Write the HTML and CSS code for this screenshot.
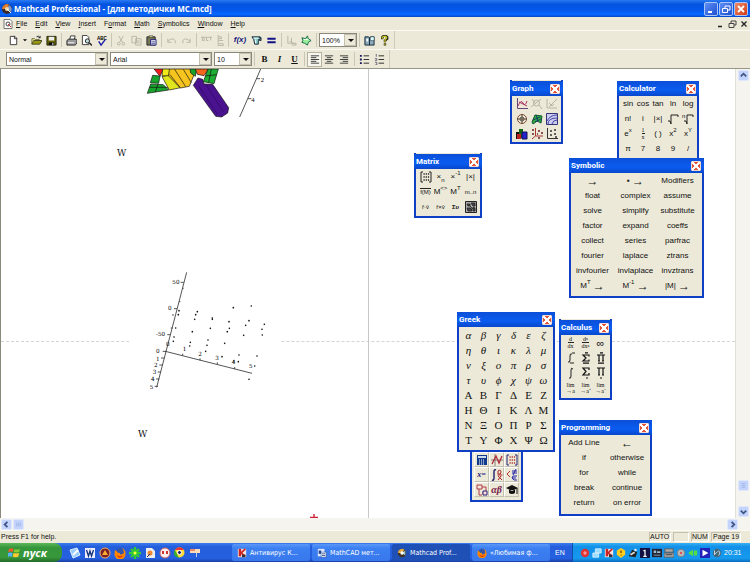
FILE: index.html
```html
<!DOCTYPE html>
<html lang="en">
<head>
<meta charset="utf-8">
<title>Mathcad Professional</title>
<link rel="stylesheet" href="styles.css">
</head>
<body>
<header class="titlebar">
  <svg class="appicon" viewBox="0 0 12 12"><circle cx="6" cy="6" r="5" fill="#3a2a2a"/><path d="M1 6a5 5 0 0 1 7-4.500L6 6z" fill="#e08030"/><path d="M8 2a5 5 0 0 1 2 7L6 6z" fill="#7a9ad0"/><circle cx="6" cy="6" r="2" fill="#f0d8b0"/><path d="M6 6l4 4" stroke="#fff"/></svg>
  <h1>Mathcad Professional - [для методички МС.mcd]</h1>
  <div class="winbtns">
    <button aria-label="Minimize"><svg viewBox="0 0 12 12"><path d="M3 9h4" stroke="#fff" stroke-width="2"/></svg></button>
    <button aria-label="Restore"><svg viewBox="0 0 12 12"><path d="M5 5V3h5v4H8M2.500 5.500h5v4h-5z" stroke="#fff" fill="none"/></svg></button>
    <button class="red" aria-label="Close"><svg viewBox="0 0 12 12"><path d="M3 3l6 6M9 3l-6 6" stroke="#fff" stroke-width="1.800"/></svg></button>
  </div>
</header>
<nav class="menubar">
  <svg class="docicon" viewBox="0 0 10 10"><path d="M1 .5h6l2 2v7H1z" fill="#fff" stroke="#777"/><circle cx="5" cy="5" r="2" fill="none" stroke="#444"/><path d="M5 5l3 3" stroke="#c33"/></svg>
  <a href="#"><u>F</u>ile</a><a href="#"><u>E</u>dit</a><a href="#"><u>V</u>iew</a><a href="#"><u>I</u>nsert</a><a href="#">F<u>o</u>rmat</a><a href="#"><u>M</u>ath</a><a href="#"><u>S</u>ymbolics</a><a href="#"><u>W</u>indow</a><a href="#"><u>H</u>elp</a>
  <div class="docbtns">
    <button aria-label="Minimize document"><svg viewBox="0 0 10 10"><path d="M3 7.500h4" stroke="#222" stroke-width="1.500"/></svg></button>
    <button aria-label="Restore document"><svg viewBox="0 0 10 10"><path d="M4 4V2h5v4H7M2 4.500h5v4H2z" stroke="#444" fill="none"/></svg></button>
    <button aria-label="Close document"><svg viewBox="0 0 10 10"><path d="M2.500 2.500l5 5M7.500 2.500l-5 5" stroke="#222" stroke-width="1.300"/></svg></button>
  </div>
</nav>
<div class="bar">
  <div class="tools">
    <button aria-label="New"><svg viewBox="0 0 12 12"><path d="M2.500 1.500h5l2 2v7h-7z" fill="#fff" stroke="#333"/><path d="M7 1v3h3" fill="none" stroke="#333"/></svg></button>
    <button class="slim" aria-label="New from template"><svg viewBox="0 0 12 12"><path d="M3 5h6L6 8z"/></svg></button>
    <button aria-label="Open"><svg viewBox="0 0 12 12"><path d="M1 10V4h3l1 1h4v2" fill="#ee9" stroke="#663"/><path d="M1 10l2-4h9l-2.500 4z" fill="#991" stroke="#442"/><path d="M6 2q2-2 4 1M10 1v2H8" fill="none" stroke="#222"/></svg></button>
    <button aria-label="Save"><svg viewBox="0 0 12 12"><path d="M1 1.500h10v9.500H1z" fill="#660" stroke="#221"/><path d="M3 2h6v4H3z" fill="#eee"/><path d="M3 8h6v3H3z" fill="#111"/><path d="M7 8.500h1V11H7z" fill="#fff"/></svg></button>
    <i class="sep"></i>
    <button aria-label="Print"><svg viewBox="0 0 12 12"><path d="M4 5l1-4h5L9 5" fill="#fff" stroke="#333"/><path d="M1 6l2-1.500h8L12 6v3l-2 2H1z" fill="#999" stroke="#222"/><path d="M2 8.500h7" stroke="#fff"/></svg></button>
    <button aria-label="Print preview"><svg viewBox="0 0 12 12"><path d="M1.500 .5h5l2 2v8h-7z" fill="#fff" stroke="#333"/><circle cx="7" cy="6.500" r="2.300" fill="#bdd" stroke="#222"/><path d="M9 8.500l3 3" stroke="#222" stroke-width="1.500"/></svg></button>
    <button aria-label="Check spelling"><svg viewBox="0 0 12 12"><text x="1" y="5" font-size="5" font-weight="bold">ABC</text><path d="M3 7l2.500 4L10 5" fill="none" stroke="#22a" stroke-width="1.600"/></svg></button>
    <i class="sep"></i>
    <button aria-label="Cut"><svg viewBox="0 0 12 12" class="off"><path d="M3 1l4 7M8 1L4 8"/><circle cx="3" cy="9.500" r="1.500"/><circle cx="8" cy="9.500" r="1.500"/></svg></button>
    <button aria-label="Copy"><svg viewBox="0 0 12 12" class="off"><path d="M1 1.500h5v7H1zM5 4h6v7H5zM6.500 6.500h3M6.500 8.500h3"/></svg></button>
    <button aria-label="Paste"><svg viewBox="0 0 12 12"><path d="M1 2h9v9H1z" fill="#775" stroke="#222"/><path d="M3.500 .8h4v2h-4z" fill="#cc8" stroke="#333" stroke-width=".6"/><path d="M5 5h6v6H5z" fill="#dde" stroke="#227"/><path d="M6 7.500h4M6 9.500h4" stroke="#227" stroke-width=".7"/></svg></button>
    <i class="sep"></i>
    <button aria-label="Undo"><svg viewBox="0 0 12 12" class="off"><path d="M2 4v4h4M2 7q5-5 8-1v3"/></svg></button>
    <button aria-label="Redo"><svg viewBox="0 0 12 12" class="off"><path d="M10 4v4H6M10 7Q5 2 2 6v3"/></svg></button>
    <i class="sep"></i>
    <button aria-label="Align across"><svg viewBox="0 0 12 12" class="off"><path d="M0 2.500h12M1.500 2v4h2V3M6 3v3h2M10.500 2v4"/></svg></button>
    <button class="narrow" aria-label="Align down"><svg viewBox="0 0 12 12" class="off"><path d="M3.500 0v12M4 2h3v2H4M4 6h5M4 9.500h5v2H4"/></svg></button>
    <i class="sep"></i>
    <button class="fx" aria-label="Insert function">f(x)</button>
    <button aria-label="Insert unit"><svg viewBox="0 0 12 12"><path d="M1 2h9v3H8v5H4L3 5z" fill="#8cc" stroke="#123"/><path d="M3 3.500h5M5 5v4" stroke="#fff"/><path d="M9 3h2v3H9" fill="none" stroke="#123"/></svg></button>
    <button aria-label="Calculate"><svg viewBox="0 0 12 12"><path d="M1.500 4h9M1.500 8h9" stroke="#118" stroke-width="2.200"/></svg></button>
    <i class="sep"></i>
    <button aria-label="Insert hyperlink"><svg viewBox="0 0 12 12" class="off"><path d="M2 1v8h4V3M4 7l6 3M6 9h5v2H6"/></svg></button>
    <button aria-label="Component wizard"><svg viewBox="0 0 12 12"><path d="M1 3l4 1 2-3 1 3 3 2-3 2-1 3-3-2-3-1 1-2z" fill="#9e9" stroke="#164"/><path d="M3 5h5" stroke="#fff"/></svg></button>
    <i class="sep"></i>
    <span class="combo zoomsel"><select aria-label="Zoom"><option>100%</option></select></span>
    <i class="sep"></i>
    <button aria-label="Resource center"><svg viewBox="0 0 12 12"><path d="M1 2h4l1 1 1-1h4v9H1z" fill="#8ab" stroke="#123"/><path d="M6 3v8" stroke="#123"/><path d="M2.500 4h2v3h-2z" fill="#fff"/><path d="M7 2h4v4H7z" fill="#dff" stroke="#345" stroke-width=".6"/></svg></button>
    <button aria-label="Help"><svg viewBox="0 0 12 12"><path d="M3.500 4.500V2.500L5 1h2.500L9 2.500V4L6.500 6v2M6.500 9v2.500" fill="none" stroke="#221" stroke-width="2.600"/><path d="M3.500 4V2.500L5 1.500h2.500L8.500 3 6.500 5.500V8M6.500 9.500v1.500" fill="none" stroke="#cc2" stroke-width="1.300"/></svg></button>
  </div>
</div>
<div class="bar">
  <div class="tools">
    <span class="combo style"><select aria-label="Style"><option>Normal</option></select></span>
    <span class="combo font"><select aria-label="Font"><option>Arial</option></select></span>
    <span class="combo size"><select aria-label="Font size"><option>10</option></select></span>
    <i class="sep"></i>
    <button class="ch"><b>B</b></button>
    <button class="ch"><em>I</em></button>
    <button class="ch"><u>U</u></button>
    <i class="sep"></i>
    <button class="on" aria-label="Align left"><svg viewBox="0 0 12 12"><path d="M2 2h9M2 4h6M2 6h9M2 8h6M2 10h9" stroke="#333"/></svg></button>
    <button aria-label="Center"><svg viewBox="0 0 12 12"><path d="M1 2h9M3 4h5M1 6h9M3 8h5M1 10h9" stroke="#333"/></svg></button>
    <button aria-label="Align right"><svg viewBox="0 0 12 12"><path d="M1 2h9M4 4h6M1 6h9M4 8h6M1 10h9" stroke="#333"/></svg></button>
    <i class="sep"></i>
    <button aria-label="Bullets"><svg viewBox="0 0 12 12"><path d="M1 2h2M1 6h2M1 10h2" stroke="#115" stroke-width="2"/><path d="M5 2h6M5 6h6M5 10h6" stroke="#222"/></svg></button>
    <button aria-label="Numbering"><svg viewBox="0 0 12 12"><path d="M2.500 0v3M1 5h2v2H1M1 9h2v3H1" stroke="#446" fill="none" stroke-width=".8"/><path d="M5 2h6M5 6h6M5 10h6" stroke="#222"/></svg></button>
  </div>
</div>

<main class="work">
  <div class="doc">
    <div class="guide-h"></div>
    <div class="guide-v"></div>
    <svg class="fig surface" viewBox="0 9 420 171">
      <g stroke="#111" stroke-width="2">
        <path d="M42 9h28l-10 22z" fill="#f21c1c"/>
        <path d="M68 9h22l-4 22-20-2z" fill="#f3e818"/>
        <path d="M38 28l22 2-4 22-25-2zM32 54l38 2 16 16-64 10z" fill="#18a32c"/>
        <path d="M28 64h56M54 54l-8 24" fill="none"/>
        <path d="M66 32l22-4 34 37-34 7z" fill="#e0e51e"/>
        <path d="M88 9h68l5 20-13 32-27 5-35-36z" fill="#f6c41e"/>
        <path d="M90 26l30 38M104 10l33 52M130 10l24 40" fill="none"/>
        <path d="M150 9h20l-4 22-14-10z" fill="#18a32c"/>
        <path d="M166 9h40l-14 20-20-4z" fill="#f2661e"/>
        <path d="M160 58l14-22 14 4 4 14 26 1 48 70-3 16-18 12-18-2z" fill="#4b128f"/>
        <path d="M176 60l56 84M198 56l52 82" fill="none" stroke="#2c0a60"/>
        <path d="M204 9h31l-13 44-32-6z" fill="#1cad32"/>
        <path d="M196 30l34-4M214 9l-8 40" fill="none"/>
      </g>
      <path d="M362 9l-63 144M350 38h10M324 98h10" stroke="#333" stroke-width="2.500" fill="none"/>
      <text x="362" y="47">2</text><text x="334" y="107">4</text>
    </svg>
    <span class="w w1">W</span>
    <svg class="fig scatter" viewBox="0 0 450 390">
      <path d="M170 22L80 367M106 259l260 66M152 52h9M132 131h9M112 209h9M98 259h10M93 279h10M88 300h10M83 321h10M78 342h10M74 364h10M157 70h4M147 110h4M126 150h6M122 189h6M158 272v-6M210 286v-6M262 298v-6M314 312v-6" fill="none" stroke="#333" stroke-width="2.500"/>
      <g class="labels"><text x="127" y="58">50</text><text x="114" y="134">0</text><text x="78" y="212">-50</text><text x="108" y="243">0</text><text x="78" y="264">0</text><text x="78" y="287">1</text><text x="72" y="307">2</text><text x="68" y="328">3</text><text x="63" y="349">4</text><text x="59" y="371">5</text><text x="158" y="259">1</text><text x="205" y="272">2</text><text x="256" y="284">3</text><text x="305" y="298">4</text><text x="357" y="310">5</text></g>
      <path class="dots" d="M147 137h0M145 149h0M137 189h0M132 216h0M130 229h0M202 140h0M197 149h0M194 163h0M187 200h0M181 232h0M179 243h0M247 159h0M247 163h0M241 190h0M234 225h0M231 241h0M227 259h0M310 128h0M297 170h0M298 190h0M292 200h0M284 235h0M276 275h0M364 123h0M357 167h0M347 181h0M341 211h0M327 270h0M325 290h0M312 288h0M403 178h0M396 193h0M397 210h0M381 273h0M374 303h0M357 343h0"/>
    </svg>
    <span class="w w2">W</span>
    <svg class="cross" viewBox="0 0 8 4"><path d="M0 3.500h8M4 0v4" stroke="#d22038" stroke-width="1.400"/></svg>

    <section class="pal graph"><h2>Graph<button class="x" aria-label="Close Graph"></button></h2>
      <div class="cells">
        <button aria-label="X-Y plot"><svg viewBox="0 0 12 12"><path d="M1.500 0v10.500H12" stroke="#647" fill="none"/><path d="M2 8q3-7 5-3t4-2M3 4l8 4" fill="none" stroke="#a36"/></svg></button>
        <button aria-label="Zoom plot"><svg viewBox="0 0 12 12" class="off"><circle cx="5.500" cy="5" r="3"/><path d="M8 7l3 4M0 9l10-8M1 1l3 4"/></svg></button>
        <button aria-label="Trace"><svg viewBox="0 0 12 12" class="off"><path d="M1 1v9h10M3 9l8-8M3 5l3 3 2-2"/></svg></button>
        <button aria-label="Polar plot"><svg viewBox="0 0 12 12"><circle cx="6" cy="6" r="4.500" fill="none" stroke="#854a30"/><circle cx="6" cy="6" r="2" fill="none" stroke="#222" stroke-width=".7"/><path d="M6 1v10M1 6h10" stroke="#543"/></svg></button>
        <button aria-label="Surface plot"><svg viewBox="0 0 12 12"><path d="M1 9l3-7 7 1-1 7-4-2-4 3z" fill="#2fae3a" stroke="#153"/><path d="M2 7l7-3M5 2l2 6M4 9l6-3" stroke="#127" stroke-width=".8"/></svg></button>
        <button aria-label="Contour plot"><svg viewBox="0 0 12 12"><path d="M.5.500h11v11H.5z" fill="#cce" stroke="#337"/><path d="M1 8q3-6 10-6M2 11q0-6 9-6M6 11q1-4 5-4" fill="none" stroke="#44a"/></svg></button>
        <button aria-label="3D bar plot"><svg viewBox="0 0 12 12"><path d="M0 4h4v7H0z" fill="#111"/><path d="M3 1h4v9H3z" fill="#161"/><path d="M1 6h4v5H1z" fill="#b22"/><path d="M6 4h5v7H6z" fill="#22c" stroke="#115"/></svg></button>
        <button aria-label="3D scatter"><svg viewBox="0 0 12 12"><path d="M4.500 0v8H12M4.500 8L1 11" fill="none" stroke="#a33"/><path d="M1 2h2M7 3h2M6 6h1M10 5h2M1 6h2M7 10h2" stroke="#622" stroke-width="1.500"/></svg></button>
        <button aria-label="Vector field"><svg viewBox="0 0 12 12"><path d="M1.500 0v10.500H12" stroke="#333" fill="none"/><path d="M4 3h2M8 2h2M4 7h2M8 6h2M9 9h2" stroke="#333" stroke-width="1.500"/></svg></button>
      </div></section>

    <section class="pal calculator"><h2>Calculator<button class="x" aria-label="Close Calculator"></button></h2>
      <div class="cells">
        <button>sin</button><button>cos</button><button>tan</button><button>ln</button><button>log</button>
        <button>n!</button><button>i</button><button>|×|</button>
        <button aria-label="Square root"><svg viewBox="0 0 12 12"><path d="M1 8h2l1 3V2h7v2" fill="none" stroke="#222"/></svg></button>
        <button aria-label="Nth root"><svg viewBox="0 0 12 12"><text x="0" y="5" font-size="6">n</text><path d="M2 8h2l1 3V2h6v2" fill="none" stroke="#222"/></svg></button>
        <button><span>e<sup>x</sup></span></button><button><span class="frac"><u>1</u>x</span></button><button>( )</button><button><span>x<sup>2</sup></span></button><button><span>x<sup>Y</sup></span></button>
        <button>π</button><button>7</button><button>8</button><button>9</button><button>/</button>
      </div></section>

    <section class="pal matrix"><h2>Matrix<button class="x" aria-label="Close Matrix"></button></h2>
      <div class="cells">
        <button aria-label="Matrix"><svg viewBox="0 0 12 12"><path d="M3 1H1v10h2M9 1h2v10H9" fill="none" stroke="#222"/><path d="M3.500 3h6M3.500 6h6M3.500 9h6" stroke="#222" stroke-width="1.400" stroke-dasharray="1.200 1"/></svg></button>
        <button><span>×<sub>n</sub></span></button><button><span>×<sup>-1</sup></span></button><button>|×|</button>
        <button class="tiny" aria-label="Vectorize"><span class="vec">f(M)</span></button><button><span>M<sup>&lt;&gt;</sup></span></button><button><span>M<sup>T</sup></span></button><button class="tiny">m..n</button>
        <button class="tiny">ř·v̄</button><button class="tiny">ř×v̄</button><button class="tiny"><b>Συ</b></button>
        <button aria-label="Picture"><svg viewBox="0 0 12 12"><path d="M.5.500h11v11H.5z" fill="#aaa" stroke="#222"/><path d="M2 3h3v2H3zM6 2h4v3H8zM2 7h4l1 3H3zM8 6l2 1v3H8zM5 5l3 3" fill="#444" stroke="#222" stroke-width=".8"/></svg></button>
      </div></section>

    <section class="pal symbolic"><h2>Symbolic<button class="x" aria-label="Close Symbolic"></button></h2>
      <div class="cells">
        <button><span class="arrow">→</span></button><button>▪&nbsp;<span class="arrow">→</span></button><button>Modifiers</button>
        <button>float</button><button>complex</button><button>assume</button>
        <button>solve</button><button>simplify</button><button>substitute</button>
        <button>factor</button><button>expand</button><button>coeffs</button>
        <button>collect</button><button>series</button><button>parfrac</button>
        <button>fourier</button><button>laplace</button><button>ztrans</button>
        <button>invfourier</button><button>invlaplace</button><button>invztrans</button>
        <button><span>M<sup>T</sup>&nbsp;</span><span class="arrow">→</span></button><button><span>M<sup>-1</sup>&nbsp;</span><span class="arrow">→</span></button><button>|M|&nbsp;<span class="arrow">→</span></button>
      </div></section>

    <section class="pal mathbar" aria-label="Math">
      <div class="cells">
        <button aria-label="Calculator toolbar"><svg viewBox="0 0 12 12"><path d="M1 1h10v10H1z" fill="#123a8c"/><path d="M2 2h8v2H2z" fill="#cde"/><path d="M3 6h6M3 8h6M3 10h6" stroke="#fff" stroke-dasharray="1 1"/></svg></button>
        <button aria-label="Graph toolbar"><svg viewBox="0 0 12 12"><path d="M0 6h12M4 0v12" stroke="#555" stroke-width=".7"/><path d="M1 10L5 2l3 7 3-7" fill="none" stroke="#b22a3a" stroke-width="1.300"/></svg></button>
        <button aria-label="Matrix toolbar"><svg viewBox="0 0 12 12"><path d="M3 1H1v10h2M9 1h2v10H9" fill="none" stroke="#227"/><path d="M3.500 3h6M3.500 6h6M3.500 9h6" stroke="#a33" stroke-width="1.500" stroke-dasharray="1.200 1"/></svg></button>
        <button class="navy">x=</button>
        <button aria-label="Calculus toolbar"><svg viewBox="0 0 12 12"><path d="M5 1Q3 0 3 3v6q0 3-2 2" fill="none" stroke="#116" stroke-width="1.300"/><path d="M7 2q3-2 3 1T7 5zM6.500 6h5M7 11l3-4M7 7l4 4" fill="none" stroke="#a22"/></svg></button>
        <button aria-label="Boolean toolbar"><svg viewBox="0 0 12 12"><path d="M4 2L1 5l3 3" fill="none" stroke="#b33"/><path d="M6 2h5M6 4h5M10 0L7 6M11 7H7l-1 2 2 2h3M6 9h4" fill="none" stroke="#22a"/></svg></button>
        <button aria-label="Programming toolbar"><svg viewBox="0 0 12 12"><path d="M1 1h5v4H1zM3 5v6h3M6 3h4v4M6 9h2" fill="none" stroke="#b33a4a"/><path d="M7 7h4v4H7z" fill="#fdd" stroke="#227"/></svg></button>
        <button class="ab"><i>αβ</i></button>
        <button aria-label="Symbolic toolbar"><svg viewBox="0 0 12 12"><path d="M0 4l6-3 6 3-6 3zM3 6v3q3 2 6 0V6" fill="#111"/><path d="M11 4v6" stroke="#111"/></svg></button>
      </div></section>

    <section class="pal greek"><h2>Greek<button class="x" aria-label="Close Greek"></button></h2>
      <div class="cells">
        <button>α</button><button>β</button><button>γ</button><button>δ</button><button>ε</button><button>ζ</button>
        <button>η</button><button>θ</button><button>ι</button><button>κ</button><button>λ</button><button>μ</button>
        <button>ν</button><button>ξ</button><button>ο</button><button>π</button><button>ρ</button><button>σ</button>
        <button>τ</button><button>υ</button><button>ϕ</button><button>χ</button><button>ψ</button><button>ω</button>
        <button class="up">Α</button><button class="up">Β</button><button class="up">Γ</button><button class="up">Δ</button><button class="up">Ε</button><button class="up">Ζ</button>
        <button class="up">Η</button><button class="up">Θ</button><button class="up">Ι</button><button class="up">Κ</button><button class="up">Λ</button><button class="up">Μ</button>
        <button class="up">Ν</button><button class="up">Ξ</button><button class="up">Ο</button><button class="up">Π</button><button class="up">Ρ</button><button class="up">Σ</button>
        <button class="up">Τ</button><button class="up">Υ</button><button class="up">Φ</button><button class="up">Χ</button><button class="up">Ψ</button><button class="up">Ω</button>
      </div></section>

    <section class="pal calculus"><h2>Calculus<button class="x" aria-label="Close Calculus"></button></h2>
      <div class="cells">
        <button><span class="frac"><u>d</u>dx</span></button><button><span class="frac"><u>dⁿ</u>dxⁿ</span></button><button class="big">∞</button>
        <button aria-label="Definite integral"><svg viewBox="0 0 12 12"><path d="M7 2Q5 1 5 4v4q0 3-2 2M7 1h3M5 11h4" fill="none" stroke="#222"/></svg></button>
        <button aria-label="Summation"><svg viewBox="0 0 12 12"><path d="M9 4.500V3H3l3 3-3 3h6V7.500M5 .8h3M3 11.200h6" fill="none" stroke="#111" stroke-width="1.200"/></svg></button>
        <button aria-label="Product"><svg viewBox="0 0 12 12"><path d="M2 3h8M4 3v6M8 3v6M3 9h2M7 9h2M5 .8h3M3 11.200h6" fill="none" stroke="#111" stroke-width="1.200"/></svg></button>
        <button aria-label="Indefinite integral"><svg viewBox="0 0 12 12"><path d="M8 2Q6 0 6 3v6q0 3-2 2" fill="none" stroke="#222"/></svg></button>
        <button aria-label="Range sum"><svg viewBox="0 0 12 12"><path d="M9 3V1H3l3 3.500L3 8h6V6M6 11h2" fill="none" stroke="#111" stroke-width="1.200"/></svg></button>
        <button aria-label="Range product"><svg viewBox="0 0 12 12"><path d="M2 1h8M4 1v7M8 1v7M3 8h2M7 8h2M5 11h2" fill="none" stroke="#111" stroke-width="1.200"/></svg></button>
        <button><span class="frac">lim<br>→a</span></button><button><span class="frac">lim<br>→a⁺</span></button><button><span class="frac">lim<br>→a⁻</span></button>
      </div></section>

    <section class="pal programming"><h2>Programming<button class="x" aria-label="Close Programming"></button></h2>
      <div class="cells">
        <button>Add Line</button><button><span class="arrow">←</span></button>
        <button>if</button><button>otherwise</button>
        <button>for</button><button>while</button>
        <button>break</button><button>continue</button>
        <button>return</button><button>on error</button>
      </div></section>
  </div>
  <div class="vscroll">
    <button aria-label="Scroll up"><svg viewBox="0 0 10 10"><path d="M2 6l3-3 3 3" /></svg></button>
    <span class="space"></span>
    <button aria-label="Vertical position"><svg viewBox="0 0 10 10" class="grip"><path d="M3 3h4M3 5h4M3 7h4"/></svg></button>
    <span class="end"></span>
    <button aria-label="Scroll down"><svg viewBox="0 0 10 10"><path d="M2 4l3 3 3-3"/></svg></button>
  </div>
</main>
<div class="hscroll">
  <button aria-label="Scroll left"><svg viewBox="0 0 10 10"><path d="M6 2L3 5l3 3"/></svg></button>
  <button aria-label="Horizontal position"><svg viewBox="0 0 10 10" class="grip"><path d="M3 3v4M5 3v4M7 3v4"/></svg></button>
  <span class="space"></span>
  <button aria-label="Scroll right"><svg viewBox="0 0 10 10"><path d="M4 2l3 3-3 3"/></svg></button>
</div>
<div class="status">
  <span class="msg">Press F1 for help.</span><span class="pane auto">AUTO</span><span class="pane blank"></span><span class="pane num">NUM</span><span class="pane page">Page 19</span>
</div>
<footer class="taskbar">
  <button class="start"><svg viewBox="0 0 14 13"><path d="M1 3q2-2 5-.5L5 6Q3 5 0 6z" fill="#ee5a2a"/><path d="M7 3q3 1 6-.5L12 6q-3 1-6 0z" fill="#8c3"/><path d="M0 7q3-1 5 0l-1 4q-2-1-4 0z" fill="#58b0f8"/><path d="M6 7q3 1 6 0l-1 4q-3 1-6 0z" fill="#fc3"/></svg>пуск</button>
  <div class="quick">
    <button aria-label="Desktop"><svg viewBox="0 0 12 12"><path d="M1 3l7-2 3 7-7 3z" fill="#9cf" stroke="#def"/><path d="M4 8l5-5" stroke="#fff" stroke-width="2"/></svg></button>
    <button aria-label="Word"><svg viewBox="0 0 12 12"><path d="M1 1h10v10H1z" fill="#eef"/><path d="M2.500 3l2 6 1.500-5 1.500 5 2-6" fill="none" stroke="#137" stroke-width="1.300"/></svg></button>
    <button aria-label="Player"><svg viewBox="0 0 12 12"><circle cx="6" cy="6" r="5" fill="#722" stroke="#fa6"/><path d="M3 8l3-5 3 5z" fill="#fa3"/></svg></button>
    <button aria-label="Firefox"><svg viewBox="0 0 12 12"><use href="#fox"/></svg></button>
    <button aria-label="ICQ"><svg viewBox="0 0 12 12"><path d="M6 0v12M0 6h12M2 2l8 8M10 2l-8 8" stroke="#3c3" stroke-width="2.400"/><circle cx="6" cy="6" r="1.500" fill="#ff4"/></svg></button>
    <button aria-label="Media"><svg viewBox="0 0 12 12"><path d="M2 1h6l3 3v7H2z" fill="#eee"/><circle cx="6" cy="6" r="2.500" fill="#e83"/><path d="M3 10l3-3" stroke="#227"/></svg></button>
    <button aria-label="Download manager"><svg viewBox="0 0 12 12"><circle cx="6" cy="6" r="5" fill="#fee"/><path d="M3 4h2v3H3zM7 4h2v3H7z" fill="#c33"/><circle cx="6" cy="6" r="5" fill="none" stroke="#c66"/></svg></button>
    <button aria-label="Chrome"><svg viewBox="0 0 12 12"><circle cx="5.500" cy="5.500" r="5" fill="#fd3"/><path d="M1 3a5 5 0 0 1 9 0H6z" fill="#e33"/><path d="M1 3l4 8A5 5 0 0 1 1 3" fill="#3a3"/><circle cx="5.500" cy="5.500" r="2" fill="#226" stroke="#fff"/></svg></button>
    <button aria-label="Archive"><svg viewBox="0 0 12 12"><path d="M1 2h10v4H1z" fill="#fdb"/><path d="M1 2h5v2H1z" fill="#e86"/><path d="M7 6h1v4H7z" fill="#bcd"/></svg></button>
  </div>
  <div class="tasks">
    <button><svg viewBox="0 0 12 12"><use href="#kav"/></svg>Антивирус К...</button>
    <button><svg viewBox="0 0 12 12"><path d="M1 1h8v9H1z" fill="#dde8ff"/><path d="M2 3h3v4H2z" fill="#248"/><path d="M5 5h6v6H5z" fill="#fff" stroke="#248" stroke-width=".6"/><path d="M6 7h4M6 9h4" stroke="#248"/></svg>MathCAD мет...</button>
    <button class="active"><svg viewBox="0 0 12 12"><circle cx="6" cy="6" r="5" fill="#432"/><path d="M1 6a5 5 0 0 1 8-4L6 6z" fill="#da4"/><path d="M6 6l4-3v6z" fill="#9cd"/><circle cx="6" cy="6" r="2" fill="#fff"/></svg>Mathcad Prof...</button>
    <button><svg viewBox="0 0 12 12"><g id="fox"><circle cx="6" cy="6" r="5" fill="#35a"/><path d="M1 3q2 1 3 3 2-1 2 1t4-1q0-3-2-5 4 2 3.500 6A5.500 5.500 0 0 1 .5 7z" fill="#f80"/><path d="M2 7q3 4 8 1-3 4-6 2z" fill="#d30"/></g></svg>«Любимая ф...</button>
  </div>
  <span class="lang">EN</span>
  <div class="tray">
    <svg viewBox="0 0 12 12"><circle cx="6" cy="6" r="5" fill="#d33"/><circle cx="6" cy="6" r="2" fill="#f99"/></svg>
    <svg viewBox="0 0 12 12"><path d="M4 1h7v5H4zM1 6h7v5H1z" fill="#9df" stroke="#def"/></svg>
    <svg viewBox="0 0 12 12"><g id="kav"><path d="M1 1h10v10H1z" fill="#f4e4e4"/><path d="M2 1h3v9H2z" fill="#c22"/><path d="M10 1L5 6l5 4" fill="none" stroke="#c22" stroke-width="2"/><path d="M6 8h4v3H6z" fill="#333"/></g></svg>
    <svg viewBox="0 0 12 12"><path d="M6 0l5 3v5l-5 4-5-4V3z" fill="#fc2"/><path d="M6 3v3M6 8v1" stroke="#640" stroke-width="1.500"/></svg>
    <svg viewBox="0 0 12 12"><path d="M1 10l4-8 6 3-2 6z" fill="#222"/><path d="M3 8l5-3" stroke="#ddd" stroke-width="2"/><circle cx="9" cy="2.500" r="1.500" fill="#eee"/></svg>
    <svg viewBox="0 0 12 12"><path d="M0 0h12v12H0z" fill="#114"/><path d="M6 2v8M4 3h2M4 10h4" stroke="#fff" stroke-width="1.500"/></svg>
    <svg viewBox="0 0 12 12"><path d="M0 1h12v10H0z" fill="#223"/><path d="M2 3h3v3H2zM6 4h4v2H6zM2 8h8v1H2z" fill="#9bc"/></svg>
    <svg viewBox="0 0 12 12"><path d="M1 1h10v4H1zM0 6h12v5H0z" fill="#aaa" stroke="#555"/><path d="M2 8h8" stroke="#333"/></svg>
    <svg viewBox="0 0 12 12"><circle cx="6" cy="6" r="4.500" fill="#bbb" stroke="#777"/><circle cx="6" cy="6" r="1.500" fill="#d55"/></svg>
    <svg viewBox="0 0 12 12"><path d="M6 2v8L1 7V5zM7 3h4v6H7z" fill="#5d4"/></svg>
    <svg viewBox="0 0 12 12"><path d="M0 0h12v12H0z" fill="#22b"/><path d="M3 2l7 4-7 4z" fill="#fff"/></svg>
    <svg viewBox="0 0 12 12"><circle cx="6" cy="6" r="5" fill="#467"/><path d="M3 3v5l4-4M8 3q3 3 0 6" fill="none" stroke="#def"/></svg>
    <time>20:31</time>
  </div>
</footer>
</body>
</html>
```
FILE: styles.css
```css
* { box-sizing: border-box; }
body {
  margin: 0;
  height: 100vh;
  display: flex;
  flex-direction: column;
  overflow: hidden;
  background: #ece9d8;
  color: #111;
  font: 8px/10px "Liberation Sans", Arial, sans-serif;
}
button {
  border: 0;
  padding: 0;
  margin: 0;
  background: none;
  color: inherit;
  font: inherit;
  display: flex;
  align-items: center;
  justify-content: center;
  white-space: nowrap;
}
svg { display: block; flex: none; }
.off { fill: none; stroke: #b8b5a4; }

.titlebar {
  height: 17px;
  display: flex;
  align-items: center;
  padding: 0 2px 0 1px;
  background: linear-gradient(#2a7af4, #0353de 25%, #0458ec 60%, #0668ff 85%, #0347c8);
}
.appicon { width: 12px; height: 12px; }
.titlebar h1 {
  margin: 0 0 0 1px;
  flex: 1;
  color: #fff;
  font: bold 8px/12px "Open Sans", "Noto Sans", sans-serif;
}
.winbtns { display: flex; gap: 1px; }
.winbtns button {
  width: 14px;
  height: 14px;
  border: 1px solid #a9c4f8;
  border-radius: 2px;
  background: linear-gradient(135deg, #5d8ff5, #1f4fd0);
}
.winbtns .red { background: linear-gradient(135deg, #ee8a68, #d13c14); }
.winbtns svg { width: 12px; height: 12px; }

.menubar {
  height: 13px;
  display: flex;
  align-items: center;
  gap: 8px;
  padding: 0 1px 0 3px;
  font-size: 7px;
}
.menubar a { color: #111; text-decoration: none; }
.docicon { width: 10px; height: 10px; margin-right: -5px; }
.docbtns { margin-left: auto; display: flex; gap: 2px; }
.docbtns svg { width: 10px; height: 10px; }

.bar {
  display: flex;
  height: 19px;
  border-top: 1px solid #fbfaf4;
}
.bar + .bar { height: 20px; border-bottom: 1px solid #98968a; }
.tools {
  display: flex;
  align-items: center;
  padding: 0 2px 0 6px;
  border-right: 1px solid #cfccbc;
}
.tools button { width: 15px; height: 15px; }
.tools svg { width: 11px; height: 11px; }
.tools .slim { width: 8px; }
.tools .slim svg { width: 8px; height: 8px; }
.tools .narrow { width: 12px; }
.tools .fx { width: 18px; color: #15157c; font: italic bold 8px/10px "Liberation Sans", sans-serif; }
.tools .ch { font: bold 9px/10px "Liberation Serif", serif; }
.tools .on { background: #f7f6ee; border: 1px solid #b5b2a0; }
.sep { width: 1px; height: 14px; margin: 0 2px; background: #c9c6b5; }
.combo {
  position: relative;
  height: 14px;
  display: flex;
  background: #fff;
  border: 1px solid #8a887c;
}
.combo select {
  appearance: none;
  flex: 1;
  min-width: 0;
  border: 0;
  padding: 0 12px 0 2px;
  background: none;
  color: #111;
  font: 7px/11px "Liberation Sans", sans-serif;
}
.combo::before {
  content: "";
  position: absolute;
  right: 0;
  top: 0;
  bottom: 0;
  width: 10px;
  background: #ece9d8;
  border: 1px solid #c4c1b0;
}
.combo::after {
  content: "";
  position: absolute;
  right: 2px;
  top: 5px;
  border: 3px solid transparent;
  border-top-color: #111;
  border-bottom: 0;
  pointer-events: none;
}
.style { width: 102px; }
.font { width: 102px; margin: 0 2px; }
.size { width: 38px; }
.zoomsel { width: 38px; }

.work { flex: 1; min-height: 0; display: flex; background: #fff; }
.doc {
  flex: 1;
  position: relative;
  overflow: hidden;
  border-left: 1px solid #8b897c;
}
.guide-h { position: absolute; left: 0; right: 0; top: 272px; border-top: 1px dashed #d4d4d4; }
.guide-v { position: absolute; left: 367px; top: 0; bottom: 0; border-left: 1px solid #c8c8c8; }
.fig { position: absolute; font: 18px "Liberation Serif", serif; background: #fff; }
.surface { left: 139px; top: 0; width: 140px; height: 57px; font-size: 20px; }
.scatter { left: 129px; top: 196px; width: 150px; height: 130px; }
.labels { font: 17px "DejaVu Serif", serif; }
.dots { stroke: #111; stroke-width: 5; stroke-linecap: round; fill: none; }
.w { position: absolute; font: 9px/12px "DejaVu Serif", serif; }
.w1 { left: 116px; top: 78px; }
.w2 { left: 137px; top: 359px; }
.cross { position: absolute; left: 309px; bottom: 0; width: 8px; height: 4px; }

.pal {
  position: absolute;
  border: 2px solid #0f3fc4;
  border-top: 0;
  background: #ece9d8;
}
.pal h2 {
  margin: 0 -2px;
  height: 15px;
  padding: 0 3px 0 2px;
  display: flex;
  align-items: center;
  justify-content: space-between;
  color: #fff;
  background: linear-gradient(#0c4fd8, #0a5cf0 60%, #0848cc);
  font: bold 8px/10px Roboto, "Open Sans", sans-serif;
}
.x {
  width: 10px;
  height: 10px;
  border: 1px solid #f4d8d0;
  border-radius: 1px;
  background:
    linear-gradient(45deg, transparent 43%, #fff 43%, #fff 57%, transparent 57%),
    linear-gradient(135deg, transparent 43%, #fff 43%, #fff 57%, transparent 57%),
    #e0573c;
}
.cells { display: grid; grid-template-columns: repeat(3, 15px); grid-auto-rows: 15px; justify-content: center; }
.cells svg { width: 12px; height: 12px; }
.cells sup, .cells sub { font-size: 6px; line-height: 0; }
.arrow { font: 12px/10px "Liberation Serif", serif; }
.graph { left: 509px; top: 11px; width: 53px; padding: 1px 0; }
.calculator { left: 616px; top: 12px; width: 82px; padding: 0 0 14px; }
.calculator .cells { grid-template-columns: repeat(5, 15px); }
.matrix { left: 413px; top: 84px; width: 68px; padding: 1px 0 2px; }
.matrix .cells { grid-template-columns: repeat(4, 15px); }
.tiny { font-size: 6px; }
.vec { border-top: 1px solid #222; line-height: 6px; }
.symbolic { left: 568px; top: 89px; width: 135px; padding-bottom: 3px; }
.symbolic .cells { grid-template-columns: 43px 43px 41px; justify-content: start; }
.greek { left: 456px; top: 243px; width: 98px; padding-bottom: 3px; }
.greek .cells { grid-template-columns: repeat(6, 15px); font: italic 11px/12px "Liberation Serif", serif; }
.greek .up { font-style: normal; }
.calculus { left: 558px; top: 250px; width: 53px; padding: 1px 0 3px; }
.frac { font: 6px/6px "Liberation Serif", serif; text-align: center; }
.frac u { display: block; text-decoration: none; border-bottom: 1px solid #222; }
.big { font-size: 11px; }
.programming { left: 558px; top: 351px; width: 93px; padding-bottom: 4px; }
.programming .cells { grid-template-columns: 43px 43px; }
.mathbar { left: 469px; top: 368px; width: 53px; padding: 15px 0 3px; }
.mathbar .cells button { border: 1px solid; border-color: #fff #c4c1b0 #c4c1b0 #fff; }
.mathbar .navy { color: #15157c; font: italic bold 8px/10px "Liberation Serif", serif; }
.mathbar .ab { color: #7a1a4a; font: bold 10px/10px "Liberation Serif", serif; }

.vscroll, .hscroll { display: flex; background: #f5f4ee; }
.vscroll { flex-direction: column; align-items: center; width: 15px; padding: 1px 1px 1px 2px; border-left: 1px solid #e2e0d4; }
.vscroll .end { height: 15px; }
.space { flex: 1; }
.hscroll { height: 12px; align-items: center; padding: 0 12px 0 1px; gap: 1px; }
.vscroll button, .hscroll button {
  width: 11px;
  height: 11px;
  border: 1px solid #dfe8fc;
  border-radius: 2px;
  background: #c3d3fb;
}
.vscroll svg, .hscroll svg { width: 9px; height: 9px; fill: none; stroke: #3f5686; stroke-width: 2; }
.vscroll .grip, .hscroll .grip { stroke: #9fb4e6; stroke-width: 1; }

.status {
  height: 13px;
  display: flex;
  align-items: center;
  gap: 2px;
  padding: 0 9px 0 1px;
  border-top: 1px solid #fbfaf4;
  font-size: 7px;
}
.status .msg { flex: 1; }
.pane { height: 10px; padding: 0 1px; border: 1px solid; border-color: #c4c1b0 #fff #fff #c4c1b0; line-height: 8px; white-space: nowrap; }
.auto { width: 22px; padding: 0; }
.blank { width: 16px; }
.num { width: 18px; padding: 0; }
.page { width: 30px; }

.taskbar {
  height: 19px;
  display: flex;
  align-items: stretch;
  color: #fff;
  background: linear-gradient(#3b7df0, #245edb 20%, #2560e0 80%, #1941a5);
}
.start {
  width: 62px;
  gap: 2px;
  padding-right: 7px;
  border-radius: 0 8px 8px 0;
  background: linear-gradient(#5cb85a, #35953a 25%, #37983b 75%, #226a28);
  font: italic bold 11px/14px "Open Sans", "Noto Sans", sans-serif;
}
.start svg { width: 13px; height: 13px; }
.quick { display: flex; align-items: center; gap: 3px; padding-left: 7px; width: 169px; }
.quick svg { width: 12px; height: 12px; }
.tasks { flex: 1; display: flex; gap: 2px; padding: 1px 1px; }
.tasks button {
  flex: 0 1 78px;
  justify-content: flex-start;
  gap: 3px;
  padding-left: 5px;
  border-radius: 2px;
  background: linear-gradient(#5a97f8, #3c80f2 25%, #3878ec);
  font: 7px/10px "DejaVu Sans Condensed", "Noto Sans", sans-serif;
}
.tasks .active { background: #1e50b6; }
.tasks svg { width: 10px; height: 10px; }
.lang { align-self: center; width: 21px; padding-left: 4px; font-size: 7px; }
.tray {
  display: flex;
  align-items: center;
  gap: 2px;
  width: 178px;
  padding-left: 7px;
  background: linear-gradient(#38b0f4, #1290e8 20%, #159aee 80%, #0c6cc0);
  border-left: 1px solid #0f4fa8;
}
.tray svg { width: 10px; height: 10px; }
.tray time { font-size: 7px; }
```
